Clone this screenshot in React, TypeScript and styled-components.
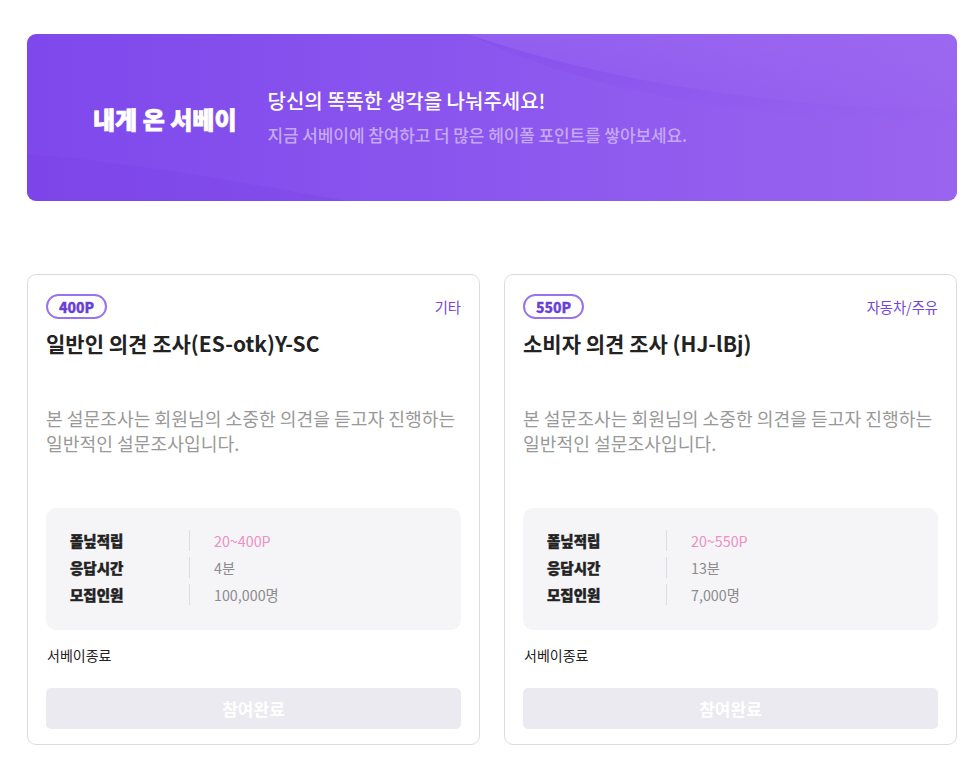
import React from "react";
import styled, { createGlobalStyle } from "styled-components";

const GlobalStyle = createGlobalStyle`
  html, body { margin: 0; padding: 0; background: #ffffff; }
  body { font-family: "Noto Sans CJK KR", "Noto Sans", sans-serif; color: #222; }
  * { box-sizing: border-box; }
`;

const Page = styled.div`
  width: 973px;
  padding: 34px 16px 0 27px;
  display: flex;
  flex-direction: column;
  gap: 73px;
`;

const Banner = styled.section`
  position: relative;
  overflow: hidden;
  width: 930px;
  height: 167px;
  border-radius: 9px;
  background: linear-gradient(90deg, #7f48ec 0%, #8a55ee 45%, #9a64ef 100%);
  display: flex;
  align-items: center;
  padding-left: 66px;
  gap: 31px;
`;

const Waves = styled.svg`
  position: absolute;
  inset: 0;
  pointer-events: none;
`;

const BannerTitle = styled.h1`
  position: relative;
  margin: 0;
  font-size: 24px;
  font-weight: 900;
  color: #ffffff;
  line-height: 1;
  padding-top: 2px;
  -webkit-text-stroke: 0.7px #ffffff;
`;

const BannerText = styled.div`
  position: relative;
  display: flex;
  flex-direction: column;
  gap: 8px;
  margin-top: -2px;
`;

const BannerHead = styled.p`
  margin: 0;
  font-size: 20px;
  font-weight: 500;
  color: #ffffff;
  line-height: 28px;
`;

const BannerSub = styled.p`
  margin: 0;
  font-size: 17px;
  font-weight: 500;
  color: #c6a8f6;
  line-height: 24px;
  letter-spacing: -0.1px;
`;

const Grid = styled.div`
  display: grid;
  grid-template-columns: 453px 453px;
  gap: 24px;
`;

const Card = styled.article`
  border: 1px solid #dcdcdc;
  border-radius: 9px;
  padding: 19px 18px 15px 18px;
  display: flex;
  flex-direction: column;
  background: #fff;
`;

const TopRow = styled.div`
  display: flex;
  justify-content: space-between;
  align-items: center;
`;

const Badge = styled.span`
  display: inline-flex;
  align-items: center;
  justify-content: center;
  height: 25px;
  padding: 0 11px;
  border: 2px solid #9a72ee;
  border-radius: 13px;
  font-size: 14px;
  font-weight: 900;
  color: #6a3fd6;
  line-height: 1;
  -webkit-text-stroke: 0.3px #6a3fd6;
`;

const Category = styled.span`
  font-size: 14.3px;
  color: #7446dc;
  line-height: 20px;
`;

const Title = styled.h2`
  margin: 10px 0 0;
  font-size: 21px;
  font-weight: 700;
  color: #222;
  line-height: 28px;
  min-height: 56px;
`;

const Desc = styled.p`
  margin: 21px 0 0;
  font-size: 18.2px;
  color: #999999;
  line-height: 25px;
  min-height: 75px;
`;

const InfoBox = styled.div`
  margin-top: 27px;
  background: #f5f5f8;
  border-radius: 10px;
  padding: 22px 24px 25px;
  display: flex;
  flex-direction: column;
  gap: 6px;
`;

const InfoRow = styled.div`
  display: grid;
  grid-template-columns: 119px 1fr;
  align-items: center;
  height: 21px;
`;

const InfoLabel = styled.span`
  font-size: 14.5px;
  font-weight: 900;
  color: #222;
  -webkit-text-stroke: 0.4px #222;
`;

const InfoValue = styled.span<{ $accent?: boolean }>`
  border-left: 1px solid #dcdce0;
  height: 21px;
  display: flex;
  align-items: center;
  padding-left: 24px;
  font-size: 14.3px;
  color: ${(p) => (p.$accent ? "#ec8fc4" : "#8c8c8c")};
`;

const Status = styled.p`
  margin: 15px 0 0 1px;
  font-size: 14px;
  color: #222;
  line-height: 20px;
`;

const DoneButton = styled.button`
  margin-top: 23px;
  height: 41px;
  border: none;
  border-radius: 5px;
  background: #ebeaf0;
  color: #ffffff;
  font-family: "Noto Sans CJK KR", sans-serif;
  font-size: 17px;
  font-weight: 700;
  cursor: default;
`;

type Survey = {
  points: string;
  category: string;
  title: string;
  reward: string;
  time: string;
  people: string;
};

const surveys: Survey[] = [
  {
    points: "400P",
    category: "기타",
    title: "일반인 의견 조사(ES-otk)Y-SC",
    reward: "20~400P",
    time: "4분",
    people: "100,000명",
  },
  {
    points: "550P",
    category: "자동차/주유",
    title: "소비자 의견 조사 (HJ-lBj)",
    reward: "20~550P",
    time: "13분",
    people: "7,000명",
  },
];

function SurveyCard({ s }: { s: Survey }) {
  return (
    <Card>
      <TopRow>
        <Badge>{s.points}</Badge>
        <Category>{s.category}</Category>
      </TopRow>
      <Title>{s.title}</Title>
      <Desc>
        본 설문조사는 회원님의 소중한 의견을 듣고자 진행하는
        <br />
        일반적인 설문조사입니다.
      </Desc>
      <InfoBox>
        <InfoRow>
          <InfoLabel>폴닢적립</InfoLabel>
          <InfoValue $accent>{s.reward}</InfoValue>
        </InfoRow>
        <InfoRow>
          <InfoLabel>응답시간</InfoLabel>
          <InfoValue>{s.time}</InfoValue>
        </InfoRow>
        <InfoRow>
          <InfoLabel>모집인원</InfoLabel>
          <InfoValue>{s.people}</InfoValue>
        </InfoRow>
      </InfoBox>
      <Status>서베이종료</Status>
      <DoneButton>참여완료</DoneButton>
    </Card>
  );
}

export default function App() {
  return (
    <>
      <GlobalStyle />
      <Page>
        <Banner>
          <Waves width="930" height="167" viewBox="0 0 930 167" preserveAspectRatio="none">
            <defs>
              <linearGradient id="w1" x1="0" y1="0" x2="0" y2="1">
                <stop offset="0" stopColor="#a070f2" stopOpacity="0.35" />
                <stop offset="1" stopColor="#a070f2" stopOpacity="0" />
              </linearGradient>
              <linearGradient id="w2" x1="0" y1="0" x2="0" y2="1">
                <stop offset="0" stopColor="#7a40e8" stopOpacity="0.5" />
                <stop offset="1" stopColor="#7a40e8" stopOpacity="0" />
              </linearGradient>
            </defs>
            <path d="M440 0 C 560 40, 700 70, 930 78 L 930 0 Z" fill="url(#w1)" />
            <path d="M440 0 C 560 40, 700 70, 930 78 L 930 92 C 700 84, 560 56, 440 0 Z" fill="url(#w2)" opacity="0.5" />
            <path d="M0 120 C 120 130, 220 150, 320 167 L 0 167 Z" fill="#7a42e6" opacity="0.35" />
          </Waves>
          <BannerTitle>내게 온 서베이</BannerTitle>
          <BannerText>
            <BannerHead>당신의 똑똑한 생각을 나눠주세요!</BannerHead>
            <BannerSub>지금 서베이에 참여하고 더 많은 헤이폴 포인트를 쌓아보세요.</BannerSub>
          </BannerText>
        </Banner>
        <Grid>
          {surveys.map((s) => (
            <SurveyCard key={s.points} s={s} />
          ))}
        </Grid>
      </Page>
    </>
  );
}
